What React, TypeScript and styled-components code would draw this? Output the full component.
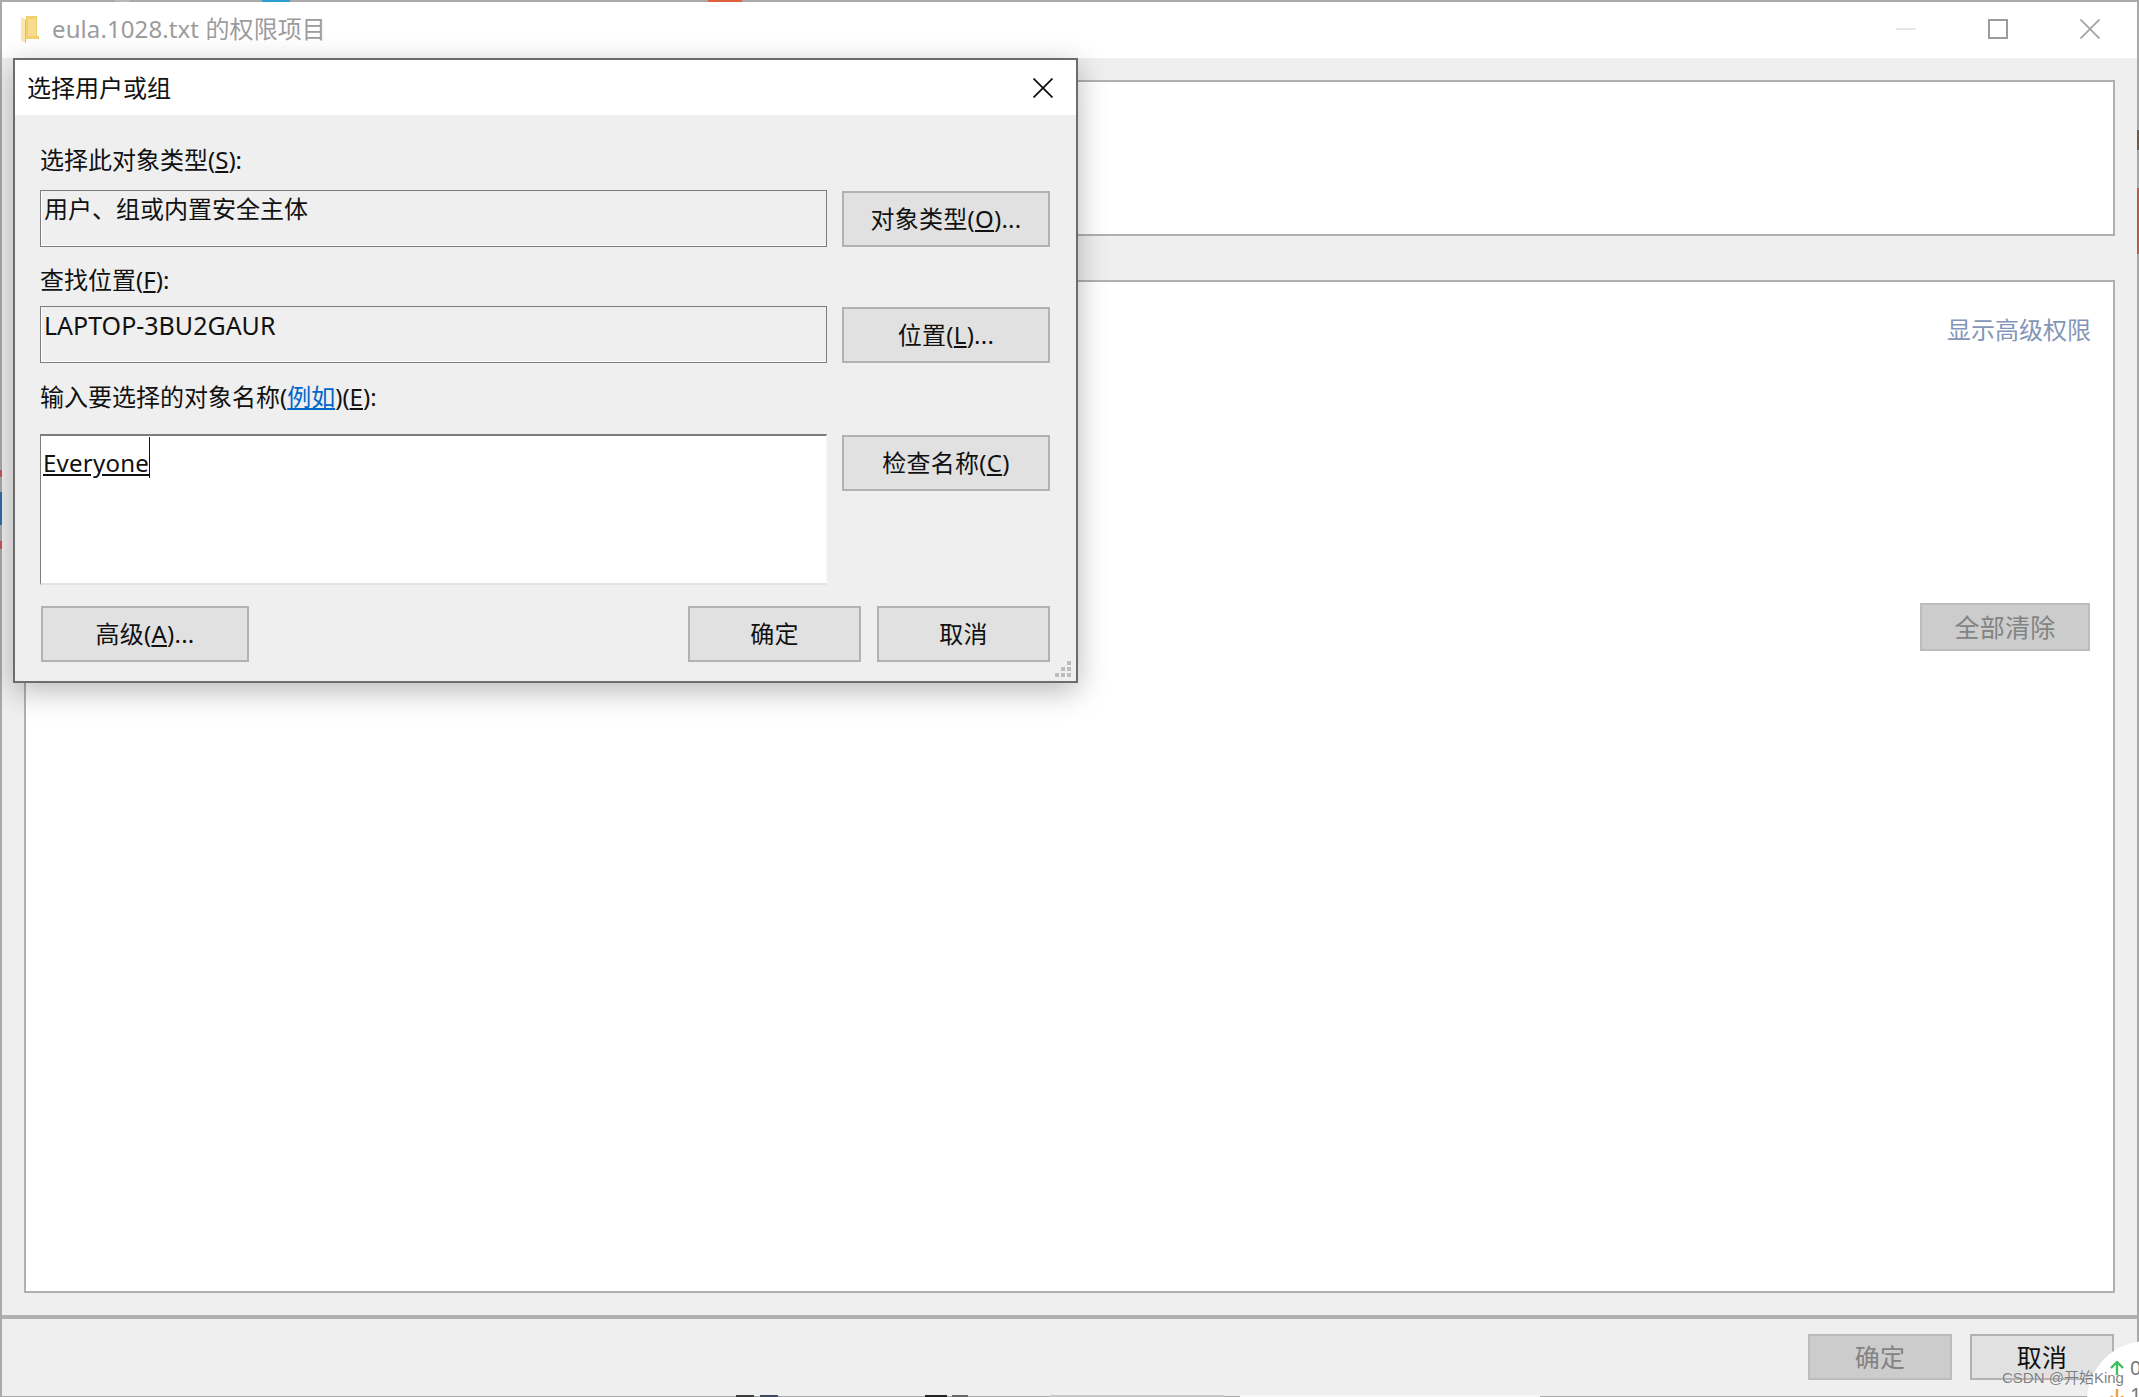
import React, { FC, ReactNode } from "react";
import styled, { createGlobalStyle } from "styled-components";

const GlobalStyle = createGlobalStyle`
  html, body {
    margin: 0;
    padding: 0;
    background: #efefef;
  }
  * {
    box-sizing: border-box;
  }
`;

interface MarkProps {
  x: number;
  y: number;
  w: number;
  h: number;
  c: string;
}

// bits of the windows behind, they show through at the edge of the frame
const edgeMarks: MarkProps[] = [
  { x: 115, y: 0, w: 15, h: 2, c: "#b8b8b8" },
  { x: 262, y: 0, w: 28, h: 2, c: "#2b9fd0" },
  { x: 708, y: 0, w: 34, h: 2, c: "#e0603c" },
  { x: 0, y: 470, w: 2, h: 7, c: "#c4545a" },
  { x: 0, y: 492, w: 2, h: 33, c: "#2e6ea8" },
  { x: 0, y: 541, w: 2, h: 8, c: "#c4545a" },
  { x: 2137, y: 130, w: 2, h: 20, c: "#6e5a48" },
  { x: 2137, y: 188, w: 2, h: 66, c: "#b95a42" },
  { x: 736, y: 1395, w: 18, h: 2, c: "#3a3a3a" },
  { x: 760, y: 1395, w: 18, h: 2, c: "#3a4a5a" },
  { x: 925, y: 1395, w: 22, h: 2, c: "#222222" },
  { x: 952, y: 1395, w: 16, h: 2, c: "#666666" },
  { x: 1050, y: 1395, w: 174, h: 2, c: "#c8c8c8" },
  { x: 1240, y: 1395, w: 300, h: 2, c: "#f6f6f6" },
];

const Page = styled.div`
  position: relative;
  width: 2139px;
  height: 1397px;
  overflow: hidden;
  font-family: "Noto Sans", "Noto Sans CJK SC", sans-serif;
  font-size: 24px;
  line-height: 32px;
  color: #111;
`;

const EdgeMark = styled.i<{ $m: MarkProps }>`
  position: absolute;
  left: ${(p) => p.$m.x}px;
  top: ${(p) => p.$m.y}px;
  width: ${(p) => p.$m.w}px;
  height: ${(p) => p.$m.h}px;
  background: ${(p) => p.$m.c};
`;

const PermissionWindow = styled.div`
  display: flex;
  flex-direction: column;
  height: 100%;
  border: solid #a9a9a9;
  border-width: 2px 2px 1px 2px;
  background: #efefef;
`;

const TitleBar = styled.div`
  display: flex;
  align-items: center;
  flex: 0 0 56px;
  padding: 0 37px 2px 19px;
  background: #fff;
`;

const WindowTitle = styled.div`
  margin-left: 13px;
  color: #9c9c9c;
  letter-spacing: 0.1px;
`;

const WindowControls = styled.div`
  display: flex;
  align-items: center;
  gap: 72px;
  margin-left: auto;
`;

const Content = styled.div`
  flex: 1;
  display: flex;
  flex-direction: column;
  gap: 44px;
  padding: 22px 22px 22px 22px;
`;

const Panel = styled.div<{ $tall?: boolean }>`
  display: flex;
  flex-direction: column;
  align-items: flex-end;
  ${(p) => (p.$tall ? "flex: 1;" : "height: 156px;")}
  padding: 32px 22px 0 0;
  border: 2px solid #b0b0b0;
  background: #fff;
`;

const AdvancedLink = styled.div`
  color: #8496b8;
`;

const Footer = styled.div`
  display: flex;
  justify-content: flex-end;
  gap: 18px;
  flex: 0 0 81px;
  padding: 15px 23px 0 0;
  border-top: 4px solid #b0b0b0;
`;

const Button = styled.div<{ $w: number; $h?: number; $disabled?: boolean; $large?: boolean }>`
  display: flex;
  align-items: center;
  justify-content: center;
  flex: none;
  width: ${(p) => p.$w}px;
  height: ${(p) => p.$h ?? 46}px;
  border: 2px solid ${(p) => (p.$disabled ? "#bcbcbc" : "#b2b2b2")};
  background: ${(p) => (p.$disabled ? "#cccccc" : "#e1e1e1")};
  color: ${(p) => (p.$disabled ? "#838383" : "#111")};
  font-size: ${(p) => (p.$large ? 25 : 24)}px;
  letter-spacing: 0.25px;
`;

const ClearButton = styled(Button)`
  margin: 257px 1px 0 0;
`;

const Dialog = styled.div`
  position: absolute;
  left: 13px;
  top: 58px;
  width: 1065px;
  height: 625px;
  border: 2px solid #6c6c6c;
  background: #efefef;
  box-shadow: 0 8px 28px rgba(0, 0, 0, 0.28);
`;

const DialogTitleBar = styled.div`
  display: flex;
  align-items: center;
  justify-content: space-between;
  height: 55px;
  padding: 0 23px 0 12px;
  background: #fff;
`;

const DialogBody = styled.div`
  display: grid;
  grid-template-columns: 787px 208px;
  column-gap: 15px;
  padding: 29px 0 0 25px;
`;

const FieldLabel = styled.div<{ $top?: number; $bottom: number }>`
  grid-column: 1 / -1;
  margin: ${(p) => p.$top ?? 0}px 0 ${(p) => p.$bottom}px;
`;

const ReadOnlyField = styled.div<{ $latin?: boolean }>`
  height: 57px;
  padding: 2px 0 0 3px;
  border: 1px solid #7c7c7c;
  box-shadow: inset 0 -1px 0 #fff, inset 1px 0 0 #fff;
  font-size: ${(p) => (p.$latin ? 25 : 24)}px;
`;

const EntryField = styled.div`
  height: 151px;
  padding: 1px 0 0 2px;
  border-style: solid;
  border-width: 2px 1px 2px 1px;
  border-color: #7c7c7c #f6f6f6 #e2e2e2 #7c7c7c;
  background: #fff;
`;

const EntryText = styled.span`
  display: inline-block;
  height: 41px;
  padding-top: 10px;
  border-right: 1px solid #111;
  letter-spacing: 0.25px;
  text-decoration: underline;
  text-underline-offset: 2px;
`;

const SideButton = styled(Button)`
  align-self: end;
`;

const CheckButton = styled(Button)`
  margin-top: 1px;
`;

const DialogActions = styled.div`
  grid-column: 1 / -1;
  display: flex;
  gap: 16px;
  margin: 21px 0 0 1px;
`;

const AdvancedButton = styled(Button)`
  margin-right: auto;
`;

const Accel = styled.span`
  text-decoration: underline;
  text-underline-offset: 2px;
`;

const ExampleLink = styled.span`
  color: #0066cc;
  text-decoration: underline;
  text-underline-offset: 2px;
`;

const Grip = styled.svg`
  position: absolute;
  right: 4px;
  bottom: 3px;
`;

const TrafficBadge = styled.div`
  position: absolute;
  left: 2087px;
  top: 1341px;
  width: 120px;
  height: 120px;
  padding: 13px 0 0 23px;
  border-radius: 50%;
  background: #fff;
  color: #777;
  font-size: 20px;
  line-height: 27px;
`;

const TrafficRow = styled.div`
  display: flex;
  align-items: center;
  gap: 6px;
`;

const Watermark = styled.div`
  position: absolute;
  left: 2002px;
  top: 1366px;
  font-family: "Liberation Sans", "Noto Sans CJK SC", sans-serif;
  font-size: 15px;
  line-height: 24px;
  color: rgba(90, 90, 90, 0.78);
  text-shadow: 0 0 1px rgba(255, 255, 255, 0.8);
  white-space: nowrap;
`;

const FolderIcon: FC = () => (
  <svg width="18" height="27" viewBox="0 0 18 27" fill="none">
    <path d="M5 0H16V20H18V23H5Z" fill="#f2d071" />
    <path d="M7 3H15V20H7Z" fill="#f8dc8e" />
    <path d="M0 1L5 3V23L5 27L1 25L0 24Z" fill="#fbe7ae" />
    <path d="M4 4H5V27L4 26Z" fill="#e6bd5a" />
  </svg>
);

const CloseIcon: FC<{ color: string }> = ({ color }) => (
  <svg width="20" height="20" viewBox="0 0 20 20" fill="none">
    <path d="M0.5 0.5L19.5 19.5M19.5 0.5L0.5 19.5" stroke={color} strokeWidth="1.8" />
  </svg>
);

const MaximizeIcon: FC = () => (
  <svg width="20" height="20" viewBox="0 0 20 20" fill="none">
    <rect x="1" y="1" width="18" height="18" stroke="#9c9c9c" strokeWidth="2" />
  </svg>
);

const MinimizeIcon: FC = () => (
  <svg width="20" height="20" viewBox="0 0 20 20" fill="none">
    <path d="M0 10H20" stroke="#e6e6e6" strokeWidth="2" />
  </svg>
);

const ArrowIcon: FC<{ color: string; down?: boolean }> = ({ color, down }) => (
  <svg width="14" height="14" viewBox="0 0 14 14" fill="none">
    <path
      d={down ? "M7 14V1M1 8L7 14L13 8" : "M7 14V1M1 7L7 1L13 7"}
      stroke={color}
      strokeWidth="2.4"
    />
  </svg>
);

const WithKey: FC<{ text: string; k: string; tail?: ReactNode }> = ({ text, k, tail }) => (
  <span>
    {text}(<Accel>{k}</Accel>){tail}
  </span>
);

const App: FC = () => {
  return (
    <Page>
      <GlobalStyle />
      <PermissionWindow>
        <TitleBar>
          <FolderIcon />
          <WindowTitle>eula.1028.txt 的权限项目</WindowTitle>
          <WindowControls>
            <MinimizeIcon />
            <MaximizeIcon />
            <CloseIcon color="#a4a4a4" />
          </WindowControls>
        </TitleBar>
        <Content>
          <Panel />
          <Panel $tall>
            <AdvancedLink>显示高级权限</AdvancedLink>
            <ClearButton $w={170} $h={48} $disabled $large>
              全部清除
            </ClearButton>
          </Panel>
        </Content>
        <Footer>
          <Button $w={144} $disabled $large>
            确定
          </Button>
          <Button $w={144} $large>
            取消
          </Button>
        </Footer>
      </PermissionWindow>

      {edgeMarks.map((m) => (
        <EdgeMark key={`${m.x}-${m.y}`} $m={m} />
      ))}

      <Dialog>
        <DialogTitleBar>
          <span>选择用户或组</span>
          <CloseIcon color="#111" />
        </DialogTitleBar>
        <DialogBody>
          <FieldLabel $bottom={14}>
            <WithKey text="选择此对象类型" k="S" tail=":" />
          </FieldLabel>
          <ReadOnlyField>用户、组或内置安全主体</ReadOnlyField>
          <SideButton $w={208} $h={56}>
            <WithKey text="对象类型" k="O" tail="..." />
          </SideButton>
          <FieldLabel $top={17} $bottom={10}>
            <WithKey text="查找位置" k="F" tail=":" />
          </FieldLabel>
          <ReadOnlyField $latin>LAPTOP-3BU2GAUR</ReadOnlyField>
          <SideButton $w={208} $h={56}>
            <WithKey text="位置" k="L" tail="..." />
          </SideButton>
          <FieldLabel $top={18} $bottom={21}>
            输入要选择的对象名称(<ExampleLink>例如</ExampleLink>)(<Accel>E</Accel>):
          </FieldLabel>
          <EntryField>
            <EntryText>Everyone</EntryText>
          </EntryField>
          <CheckButton $w={208} $h={56}>
            <WithKey text="检查名称" k="C" />
          </CheckButton>
          <DialogActions>
            <AdvancedButton $w={208} $h={56}>
              <WithKey text="高级" k="A" tail="..." />
            </AdvancedButton>
            <Button $w={173} $h={56}>
              确定
            </Button>
            <Button $w={173} $h={56}>
              取消
            </Button>
          </DialogActions>
        </DialogBody>
        <Grip width="17" height="17" viewBox="0 0 17 17" fill="#bdbdbd">
          <rect x="12" y="0" width="4" height="4" />
          <rect x="6" y="6" width="4" height="4" />
          <rect x="12" y="6" width="4" height="4" />
          <rect x="0" y="12" width="4" height="4" />
          <rect x="6" y="12" width="4" height="4" />
          <rect x="12" y="12" width="4" height="4" />
        </Grip>
      </Dialog>

      <TrafficBadge>
        <TrafficRow>
          <ArrowIcon color="#3fbf5f" />0
        </TrafficRow>
        <TrafficRow>
          <ArrowIcon color="#f59a45" down />1
        </TrafficRow>
      </TrafficBadge>
      <Watermark>CSDN @开始King</Watermark>
    </Page>
  );
};

export default App;
